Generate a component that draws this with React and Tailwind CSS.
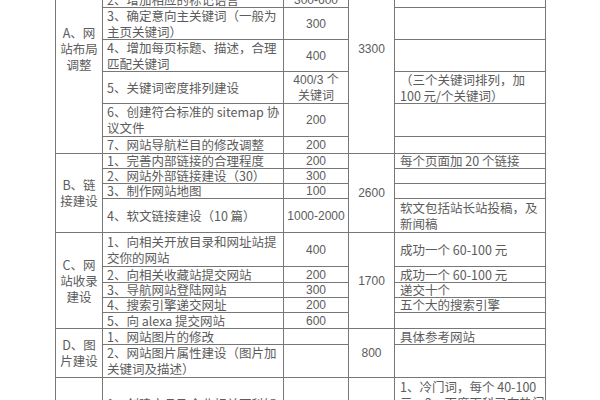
const rows = [
  // [col2, col3, col5]
  { a: "A", label: ["A、网", "站布局", "调整"], total: "3300", span: 7, items: [
    [["1、网站结构的合理规划，", "导航与目录层级的", "整体优化"], "300", [""]],
    [["2、增加相应的标记语言"], "300-600", [""]],
    [["3、确定意向主关键词（一般为", "主页关键词）"], "300", [""]],
    [["4、增加每页标题、描述，合理", "匹配关键词"], "400", [""]],
    [["5、关键词密度排列建设"], ["400/3 个", "关键词"], ["（三个关键词排列，加", "100 元/个关键词）"]],
    [["6、创建符合标准的 sitemap 协", "议文件"], "200", [""]],
    [["7、网站导航栏目的修改调整"], "200", [""]],
  ]},
  { a: "B", label: ["B、链", "接建设"], total: "2600", span: 4, items: [
    [["1、完善内部链接的合理程度"], "200", ["每个页面加 20 个链接"]],
    [["2、网站外部链接建设（30）"], "300", [""]],
    [["3、制作网站地图"], "100", [""]],
    [["4、软文链接建设（10 篇）"], "1000-2000", ["软文包括站长站投稿，及", "新闻稿"]],
  ]},
  { a: "C", label: ["C、网", "站收录", "建设"], total: "1700", span: 5, items: [
    [["1、向相关开放目录和网址站提", "交你的网站"], "400", ["成功一个 60-100 元"]],
    [["2、向相关收藏站提交网站"], "200", ["成功一个 60-100 元"]],
    [["3、导航网站登陆网站"], "300", ["递交十个"]],
    [["4、搜索引擎递交网址"], "200", ["五个大的搜索引擎"]],
    [["5、向 alexa 提交网站"], "600", [""]],
  ]},
  { a: "D", label: ["D、图", "片建设"], total: "800", span: 2, items: [
    [["1、网站图片的修改"], "", ["具体参考网站"]],
    [["2、网站图片属性建设（图片加", "关键词及描述）"], "", [""]],
  ]},
  { a: "E", label: ["E、百", "科建设"], total: "", span: 1, items: [
    [["1、创建产品及企业相关百科知", "识词条，完善企业相关信息，", "2、修改完善已有词条内容，", "增加相关链接", "3、百度知道问答", "推广"], "", ["1、冷门词，每个 40-100", "元，2、百度百科已有热门", "词条修改，每个 200 元，", "3、新建词条，每个", "300-500 元", "具体视难度而定", "另计", ""]],
  ]},
];

const spanClass = { 1: "row-span-1", 2: "row-span-2", 4: "row-span-4", 5: "row-span-5", 7: "row-span-7" };

function Lines({ lines }) {
  const lead = lines.length > 1 ? "leading-[16px]" : "leading-[14px]";
  return lines.map((l, i) => (
    <span key={i} className={`block whitespace-nowrap ${lead}`}>{l || "\u00a0"}</span>
  ));
}

export default function App() {
  const cell = "border-r border-b border-[#777] flex items-center";
  return (
    <div className="w-[600px] h-[400px] overflow-hidden bg-white">
      <div
        className="ml-[55px] mt-[-57px] w-[490px] grid grid-cols-[47px_181px_65px_46px_151px] grid-rows-[48px_16px_32px_32px_32px_33px_17px_15px_15px_15px_34px_34px_16px_15px_15px_16px_16px_33px_132px] border-l border-t border-[#777] text-[12.5px] text-[#5c5c5c] font-['Noto_Sans_CJK_SC',sans-serif]"
      >
        {rows.map((sec) =>
          sec.items.map((it, i) => (
            <div key={sec.a + i} className="contents">
              {i === 0 && (
                <div className={`${cell} ${spanClass[sec.span]} justify-center text-center`}>
                  <div><Lines lines={sec.label} /></div>
                </div>
              )}
              <div className={`${cell} pl-1`}>
                <div><Lines lines={it[0]} /></div>
              </div>
              <div className={`${cell} justify-center text-center font-['Liberation_Sans','Noto_Sans_CJK_SC',sans-serif] text-[12px]`}>
                <div><Lines lines={Array.isArray(it[1]) ? it[1] : [it[1]]} /></div>
              </div>
              {i === 0 && (
                <div className={`${cell} ${spanClass[sec.span]} justify-center font-['Liberation_Sans',sans-serif] text-[12px]`}>
                  {sec.total}
                </div>
              )}
              <div className={`${cell} pl-[5px] ${sec.a === "E" ? "items-start pt-px" : ""}`}>
                <div><Lines lines={it[2]} /></div>
              </div>
            </div>
          ))
        )}
      </div>
    </div>
  );
}
